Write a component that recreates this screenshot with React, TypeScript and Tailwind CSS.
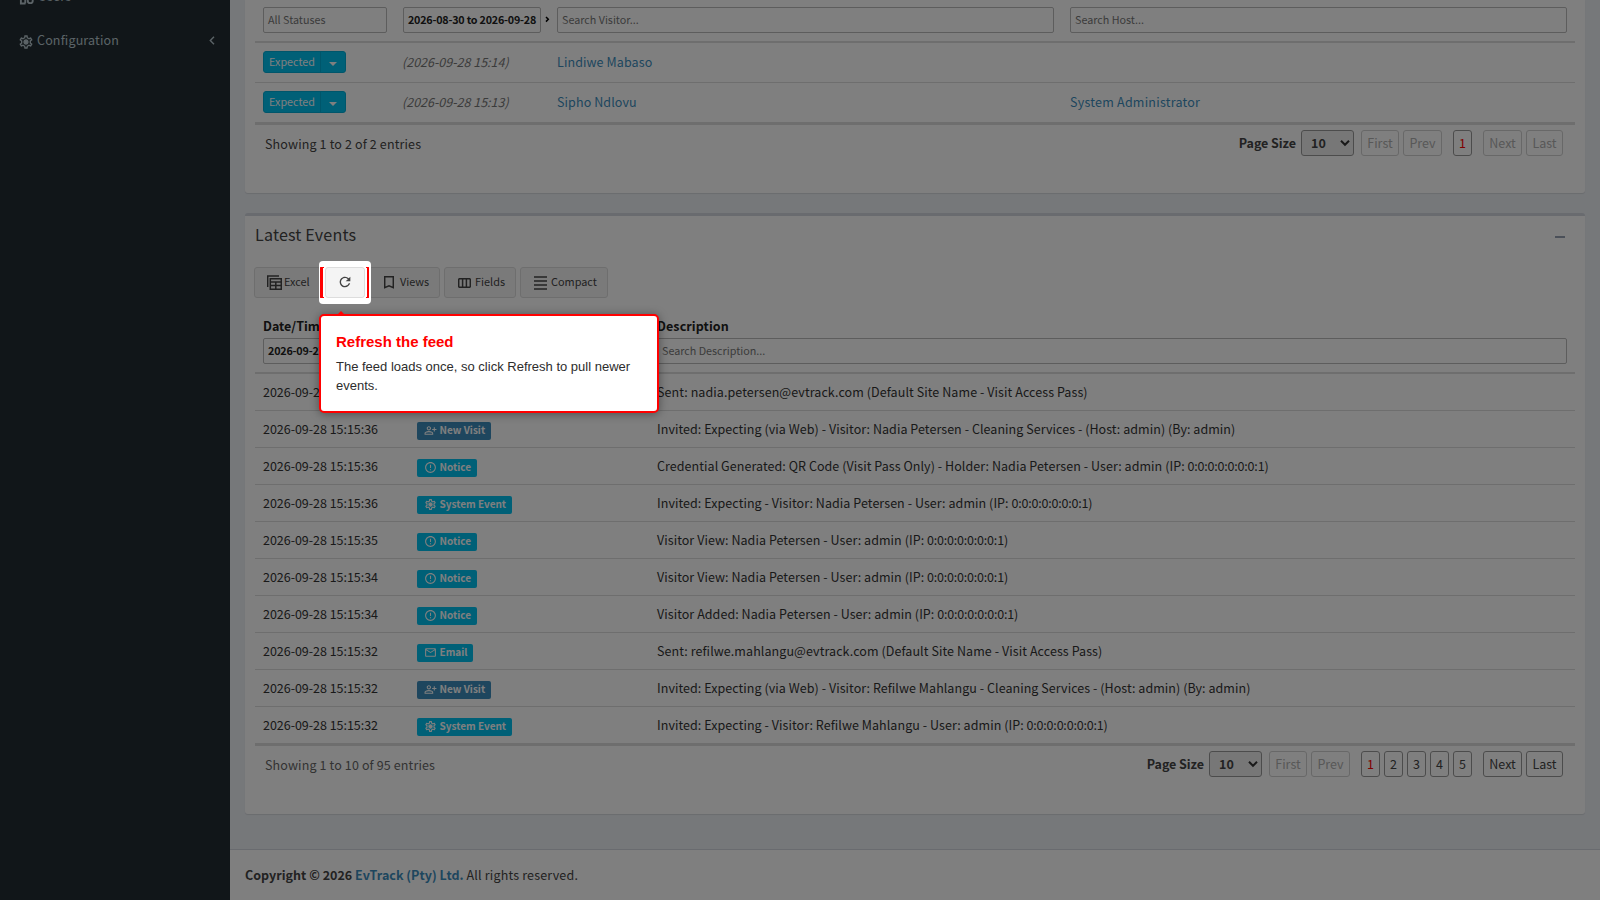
import React from "react";
import {
  MdRefresh,
  MdOutlineErrorOutline,
  MdOutlineSettings,
  MdOutlineMail,
  MdOutlinePersonAddAlt,
} from "react-icons/md";

const grid1 = "grid grid-cols-[140px_154px_513px_1fr]";
const grid2 = "grid grid-cols-[154px_240px_1fr]";

function Gear({ size, className }: { size: number; className?: string }) {
  return (
    <svg width={size} height={size} viewBox="0 0 24 24" fill="currentColor" className={className}>
      <MdOutlineSettings size={24} />
      <circle cx="12" cy="12" r="3" />
    </svg>
  );
}

type Kind = "visit" | "notice" | "system" | "email";

const kinds: Record<Kind, { label: string; cls: string; icon: React.ReactNode }> = {
  visit: { label: "New Visit", cls: "w-[74px] bg-[#3c8dbc]", icon: <MdOutlinePersonAddAlt size={13} /> },
  notice: { label: "Notice", cls: "w-[60px] bg-[#00c0ef]", icon: <MdOutlineErrorOutline size={13} /> },
  system: { label: "System Event", cls: "w-[95px] bg-[#00c0ef]", icon: <Gear size={13} /> },
  email: { label: "Email", cls: "w-[56px] bg-[#00c0ef]", icon: <MdOutlineMail size={13} /> },
};

const events: { time: string; kind: Kind; text: string; ip?: boolean }[] = [
  { time: "15:15:36", kind: "email", text: "Sent: nadia.petersen@evtrack.com (Default Site Name - Visit Access Pass)" },
  { time: "15:15:36", kind: "visit", text: "Invited: Expecting (via Web) - Visitor: Nadia Petersen - Cleaning Services - (Host: admin) (By: admin)" },
  { time: "15:15:36", kind: "notice", ip: true, text: "Credential Generated: QR Code (Visit Pass Only) - Holder: Nadia Petersen - User: admin" },
  { time: "15:15:36", kind: "system", ip: true, text: "Invited: Expecting - Visitor: Nadia Petersen - User: admin" },
  { time: "15:15:35", kind: "notice", ip: true, text: "Visitor View: Nadia Petersen - User: admin" },
  { time: "15:15:34", kind: "notice", ip: true, text: "Visitor View: Nadia Petersen - User: admin" },
  { time: "15:15:34", kind: "notice", ip: true, text: "Visitor Added: Nadia Petersen - User: admin" },
  { time: "15:15:32", kind: "email", text: "Sent: refilwe.mahlangu@evtrack.com (Default Site Name - Visit Access Pass)" },
  { time: "15:15:32", kind: "visit", text: "Invited: Expecting (via Web) - Visitor: Refilwe Mahlangu - Cleaning Services - (Host: admin) (By: admin)" },
  { time: "15:15:32", kind: "system", ip: true, text: "Invited: Expecting - Visitor: Refilwe Mahlangu - User: admin" },
];

function Field({ children, cls = "text-[#777]" }: { children?: React.ReactNode; cls?: string }) {
  return (
    <div className={`flex h-[26px] items-center overflow-hidden whitespace-nowrap rounded-[2px] border border-[#bbb] px-1 text-[10.75px] ${cls}`}>
      {children}
    </div>
  );
}

function PageButton({ label, cls }: { label: string; cls: string }) {
  return (
    <span className={`flex h-[26px] items-center justify-center rounded-[3px] border ${cls}`}>{label}</span>
  );
}

function Pager({ pages }: { pages: number }) {
  const off = "border-[#d0d0d0] text-[#b0b0b0]";
  const on = "border-[#999] text-[#444]";
  const last = pages > 1 ? on : off;
  return (
    <div className="flex items-center pt-[5px]">
      <span className="mr-[5px] font-bold tracking-[-0.05px] text-[#444]">Page Size</span>
      <span className="mr-[7px] flex h-[26px] w-[53px] items-center justify-between rounded-[3px] border border-[#999] bg-[#efefef] pl-[9px] pr-[3px] font-bold text-[#444]">
        10
        <svg width="10" height="8" viewBox="0 0 10 8" fill="none" stroke="#333" strokeWidth="2">
          <path d="M1 1.8 5 5.8 9 1.8" />
        </svg>
      </span>
      <PageButton label="First" cls={`mr-1 w-[38px] ${off}`} />
      <PageButton label="Prev" cls={`w-[39px] ${off}`} />
      <div className="mx-[11px] flex gap-1">
        {Array.from({ length: pages }, (_, i) => (
          <PageButton key={i} label={String(i + 1)} cls={i === 0 ? "w-[19px] border-[#999] text-[#f00]" : `w-[19px] ${on}`} />
        ))}
      </div>
      <PageButton label="Next" cls={`mr-1 w-[39px] ${last}`} />
      <PageButton label="Last" cls={`w-[37px] ${last}`} />
    </div>
  );
}

function Tool({ cls, icon, label }: { cls: string; icon: React.ReactNode; label?: string }) {
  return (
    <div className={`flex h-[31px] items-center rounded-[3px] border border-[#ddd] bg-[#f4f4f4] text-[10.9px] leading-4 text-[#444] ${cls}`}>
      {icon}
      {label && <span className="-mt-[3px]">{label}</span>}
    </div>
  );
}

function Visitor({ date, name, host }: { date: string; name: string; host?: string }) {
  return (
    <div className={`${grid1} h-[39px] items-start px-2 pt-2`}>
      <div className="flex h-[22px] w-[83px] rounded-[3px] border border-[#00acd6] bg-[#00c0ef] text-[10.75px] text-white">
        <span className="-mt-px flex w-[56px] items-center justify-center">Expected</span>
        <span className="flex flex-1 items-center justify-center border-l border-[#00acd6] pr-px pt-[3px]">
          <svg width="8" height="4" viewBox="0 0 8 4" fill="currentColor"><path d="M0 0h8L4 4z" /></svg>
        </span>
      </div>
      <div className="-ml-px mt-px italic text-[#777]">({date})</div>
      <div className="mt-px tracking-[0.1px] text-[#3c8dbc]">{name}</div>
      <div className="mt-px tracking-[0.24px] text-[#3c8dbc]">{host}</div>
    </div>
  );
}

export default function App() {
  return (
    <div className="relative flex h-[900px] w-[1600px] overflow-hidden bg-[#ecf0f5] font-['Noto_Sans_CJK_SC',sans-serif] text-[12.5px] leading-5 text-[#333]">
      <aside className="h-full w-[230px] shrink-0 bg-[#222d32] tracking-[0.15px] text-[#b8c7ce]">
        <div className="-mt-[14px] flex h-5 items-center pl-[19px]">
          <svg className="mr-1 mt-[3px]" width="15" height="15" viewBox="0 0 24 24" fill="none" stroke="currentColor" strokeWidth="3">
            <path d="M3 22v-7M1.500 21.500h9M10 12v9" /><circle cx="18" cy="17" r="4" />
          </svg>
          Users
        </div>
        <div className="mt-6 flex h-5 items-center pl-[18px] pr-[15px]">
          <Gear size={16} className="mr-[3px] mt-[4px]" />
          <span className="flex-1">Configuration</span>
          <svg width="6" height="9" viewBox="0 0 6 9" fill="none" stroke="currentColor" strokeWidth="1.4"><path d="M5 .8 1.3 4.5 5 8.2" /></svg>
        </div>
      </aside>

      <main className="flex min-w-0 flex-1 flex-col">
        <section className="mx-[15px] h-[193px] rounded-b-[3px] bg-white px-[10px] shadow-[0_1px_1px_rgba(0,0,0,0.1)]">
          <div className={`${grid1} h-[43px] items-start border-b-2 border-[#ddd] px-2 pt-[7px]`}>
            <Field cls="w-[124px] text-[#777]">All Statuses</Field>
            <div className="flex items-center">
              <Field cls="w-[138px] font-bold tracking-[-0.22px] text-[#222]">2026-08-30 to 2026-09-28</Field>
              <svg className="-mt-0.5 ml-1" width="5" height="7" viewBox="0 0 5 7" fill="none" stroke="#000" strokeWidth="1.5"><path d="M1 1l2.3 2.3L1 5.6" /></svg>
            </div>
            <Field cls="mr-4 text-[#777]">Search Visitor...</Field>
            <Field>Search Host...</Field>
          </div>
          <Visitor date="2026-09-28 15:14" name="Lindiwe Mabaso" />
          <div className="border-t border-[#ddd]">
            <Visitor date="2026-09-28 15:13" name="Sipho Ndlovu" host="System Administrator" />
          </div>
          <div className="flex items-start justify-between border-t-[3px] border-[#ddd] pl-[10px] pr-3">
            <span className="pt-[9px] tracking-[0.14px] text-[#444]">Showing 1 to 2 of 2 entries</span>
            <Pager pages={1} />
          </div>
        </section>

        <section className="mx-[15px] mt-5 h-[601px] rounded-[3px] border-t-[3px] border-[#d2d6de] bg-white px-[10px] shadow-[0_1px_1px_rgba(0,0,0,0.1)]">
          <div className="flex h-[41px] items-center justify-between pr-[10px] text-[16.1px] tracking-[0.17px] text-[#444]">
            <span className="-mt-[6px]">Latest Events</span>
            <span className="h-0.5 w-[10px] bg-[#97a0b3]" />
          </div>
          <div className="-ml-px mt-[10px] flex gap-1">
            <Tool
              cls="w-[67px] pl-[12px]"
              label="Excel"
              icon={
                <svg className="mr-[2px]" width="15" height="15" viewBox="0 0 15 15" fill="none" stroke="currentColor" strokeWidth="1.5">
                  <path d="M.7 12V.9H12M3.3 3.7h11v10.600h-11zM3.3 6.9h11M3.3 10.5h11M8.8 6.9v7.400" />
                </svg>
              }
            />
            <Tool cls="w-10 justify-center" icon={<MdRefresh size={16} />} />
            <Tool
              cls="w-[71px] pl-[14px]"
              label="Views"
              icon={
                <svg className="mr-[6px]" width="10" height="13" viewBox="0 0 10 13" fill="none" stroke="currentColor" strokeWidth="1.5">
                  <path d="M.7.7h8.600v11L5 9.900.7 11.700z" />
                </svg>
              }
            />
            <Tool
              cls="w-[72px] pl-[13px]"
              label="Fields"
              icon={
                <svg className="mr-[4px]" width="13" height="10" viewBox="0 0 13 10" fill="none" stroke="currentColor" strokeWidth="1.5">
                  <rect x=".7" y=".7" width="11.600" height="8.600" rx="1" />
                  <path d="M4.600.7v8.600M8.400.7v8.600" />
                </svg>
              }
            />
            <Tool
              cls="w-[88px] pl-[13px]"
              label="Compact"
              icon={
                <svg className="mr-[4px]" width="13" height="14" viewBox="0 0 13 14" fill="none" stroke="currentColor" strokeWidth="1.5">
                  <path d="M0 1h13M0 5h13M0 9h13M0 13h13" />
                </svg>
              }
            />
          </div>
          <div className={`${grid2} mt-[18px] h-[58px] grid-rows-[22px_26px] border-b-2 border-[#ddd] px-2`}>
            <div className="font-bold text-[#222]">Date/Time</div>
            <div />
            <div className="font-bold tracking-[0.09px] text-[#222]">Description</div>
            <Field cls="w-[138px] font-bold tracking-[-0.2px] text-[#222]">2026-09-27</Field>
            <Field cls="mr-4 text-[#777]" />
            <Field>Search Description...</Field>
          </div>
          {events.map((e, i) => (
            <div key={i} className={`${grid2} items-center px-2 ${i === 0 ? "h-9" : "h-[37px] border-t border-[#ddd]"}`}>
              <div className="tracking-[-0.03px]">2026-09-28 {e.time}</div>
              <div className={`mt-[3px] flex h-[18px] items-center gap-[2.5px] rounded-[2px] pl-[7px] text-[10px] font-bold text-white ${kinds[e.kind].cls}`}>
                {kinds[e.kind].icon}
                <span className="-mt-px">{kinds[e.kind].label}</span>
              </div>
              <div className={e.kind === "visit" ? "tracking-[0.055px]" : e.kind === "email" ? "tracking-[0.08px]" : "tracking-[0.06px]"}>
                {e.text}
                {e.ip && <> (IP: <span className="tracking-[-0.2px]">0:0:0:0:0:0:0:1</span>)</>}
              </div>
            </div>
          ))}
          <div className="flex items-start justify-between border-t-[3px] border-[#ddd] pl-[10px] pr-3">
            <span className="pt-[9px] tracking-[0.13px] text-[#666]">Showing 1 to 10 of 95 entries</span>
            <Pager pages={5} />
          </div>
        </section>
        <footer className="mt-auto h-[51px] border-t border-[#d2d6de] bg-white p-[15px] tracking-[0.18px] text-[#444]">
          <b className="tracking-[0.02px]">Copyright © 2026 <span className="text-[#3c8dbc]">EvTrack (Pty) Ltd.</span></b> All rights reserved.
        </footer>
      </main>

      <div className="absolute left-[319px] top-[261px] flex h-[43px] w-[52px] items-center justify-between rounded-[4px] bg-white pb-px pl-px pr-[2px] shadow-[0_0_0_2000px_rgba(0,0,0,0.5)]">
        <span className="h-[31px] w-1 rounded-l-[1px] border-y border-l-[3px] border-[#f00]" />
        <span className="flex h-[31px] w-10 items-center justify-center rounded-[3px] border border-[#ddd] bg-[#f4f4f4] text-[#444]">
          <MdRefresh size={16} />
        </span>
        <span className="h-[31px] w-[3px] rounded-r-[1px] border-y border-r-2 border-[#f00]" />
      </div>

      <div className="absolute left-[319px] top-[314px] h-[99px] w-[340px] rounded-[5px] border-2 border-[#f00] bg-white px-[15px] pt-[15px] font-['Liberation_Sans',sans-serif] shadow-[0_1px_10px_rgba(0,0,0,0.4)]">
        <svg className="absolute -top-[5px] left-[15px]" width="10" height="5" viewBox="0 0 10 5" fill="#f00"><path d="M5 0l5 5H0z" /></svg>
        <div className="text-[15px] font-bold leading-[21px] text-[#f00]">Refresh the feed</div>
        <div className="mt-[5px] text-[13px] leading-[19px] text-[#2d2d2d]">The feed loads once, so click Refresh to pull newer events.</div>
      </div>
    </div>
  );
}
